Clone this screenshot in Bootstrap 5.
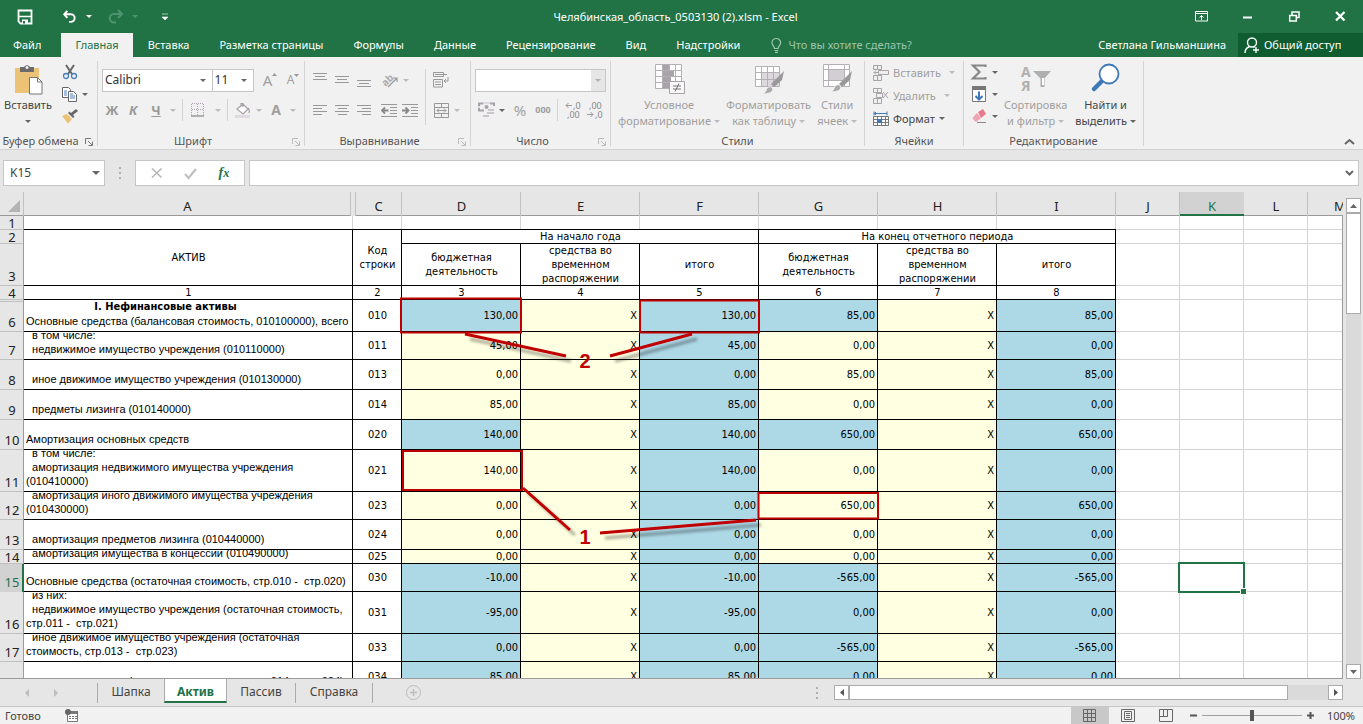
<!DOCTYPE html>
<html lang="ru">
<head>
<meta charset="utf-8">
<meta name="viewport" content="width=device-width, initial-scale=1">
<title>Челябинская_область_0503130 (2).xlsm - Excel</title>
<link href="https://cdn.jsdelivr.net/npm/bootstrap@5.3.0/dist/css/bootstrap.min.css" rel="stylesheet">
<style>
:root{--xl:#217346;--ink:#444;--dim:#a19f9f}
body{font:11px/16px "Noto Sans","Open Sans",sans-serif;color:var(--ink);background:#e6e6e6;overflow:hidden}
body>*{flex-shrink:0}
button{border:0;background:transparent;padding:0;color:inherit;font:inherit}
svg{display:block;flex:none;overflow:visible}
.bar-title{height:33px;background:var(--xl);color:#fff}
.bar-title .ic{width:46px;height:33px}
.bar-tabs{height:24px;background:var(--xl)}
.bar-tabs .rtab{color:#fff;padding:0 15px;line-height:24px;height:24px;text-decoration:none;white-space:nowrap}
.bar-tabs .rtab.first{padding:0 20px 0 13px}
.bar-tabs .rtab.active{background:#f1f1f1;color:var(--xl);padding:0 14px}
.tell{border:0;background:transparent;width:150px;color:#fff;padding:0;outline:0}
.tell::placeholder{color:#9cc5ac;opacity:1}
.share{background:#0e5c2f;color:#fff;padding:0 0 0 6px;height:24px;width:125px}
.ribbon{background:#f1f1f1;height:93px;border-bottom:1px solid #d2d2d2;padding-top:4px}
.rgroup{border-right:1px solid #d4d4d4;height:85px;flex:none}
.rgroup .rbody{height:72px}
.rgroup .rname{position:relative;text-align:center;line-height:16px;color:#555}
.rname svg{position:absolute;right:4px;top:5px}
.g1{width:98px}.g2{width:207px}.g3{width:166px}.g4{width:140px}.g5{width:254px}.g6{width:99px}.g7{width:180px}
.big{padding-top:2px;white-space:nowrap;align-self:flex-start}
.big svg.pic{margin:0 auto 2px}
.dim{color:var(--dim)}
.cv{display:inline-block;width:0;height:0;border:3px solid transparent;border-top-color:#666;border-bottom:0;vertical-align:2px}
.dim .cv,.cv.dim{border-top-color:#bbb}
.k{display:inline-flex;align-items:center;justify-content:center;height:22px;flex:none;vertical-align:top}
.k10{width:10px}.k20{width:20px}.k22{width:22px}.k24{width:24px}.k26{width:26px}
.vsep{width:1px;height:22px;background:#d4d4d4}
.vsep.tall{height:56px}
.rrow{height:30px;display:flex;align-items:center}
.fsel{appearance:none;height:23px;border:1px solid #c6c6c6;border-radius:0;background:#fff url("data:image/svg+xml,%3Csvg xmlns='http://www.w3.org/2000/svg' width='6' height='3'%3E%3Cpath d='M0 0h6L3 3z' fill='%23666'/%3E%3C/svg%3E") no-repeat right 6px center;font-size:12px;color:#333;padding:0 2px}
.fsel.off{background:#fff url("data:image/svg+xml,%3Csvg xmlns='http://www.w3.org/2000/svg' width='14' height='21'%3E%3Cpath d='M0 0h14v21H0z' fill='%23e6e6e6'/%3E%3Cpath d='M4 9h6l-3 3z' fill='%23b0b0b0'/%3E%3C/svg%3E") no-repeat right center}
.letter{font-weight:700;font-size:13px;color:#999}
.cmd{height:23px;gap:4px}
.fbar{height:42px;padding:10px 4px 6px 3px}
.fbox{background:#fff;border:1px solid #c6c6c6;height:26px}
.fbox input{border:0;outline:0;width:100%;background:transparent;color:#444;font-size:12px;padding:0 6px}
.fbox.name{width:102px}
.fbox.tools{width:110px}
.dots{width:30px}
.area{min-height:0;flex:1 1 0}
.sheetbox{position:relative;overflow:hidden;min-width:0;border-bottom:1px solid #9b9b9b}
.edge{position:absolute;right:0;top:24px;bottom:0;width:1px;background:#9b9b9b}
.gridtab{table-layout:fixed;width:100%;min-width:1400px;border-collapse:separate;border-spacing:0;color:#000;font:11px/14px "DejaVu Sans Condensed","DejaVu Sans",sans-serif;background:#fff}
.gridtab td,.gridtab th{padding:0;overflow:hidden;vertical-align:middle;text-align:center;font-weight:400;box-shadow:inset -1px -1px #d4d4d4}
.gridtab thead th{height:24px;background:#e6e6e6;font:13px/16px "Noto Sans",sans-serif;padding-top:4px;color:#222;box-shadow:inset -1px 0 #c0c0c0,inset 0 -1px #9b9b9b}
.gridtab thead th.sel{background:#d2d2d2;color:var(--xl);box-shadow:inset 0 -2px var(--xl)}
.gridtab th.ca{border-right:2px solid #e6e6e6}
.gridtab th.cc{border-left:2px solid #e6e6e6;box-shadow:inset 1px 0 #c0c0c0,inset -1px 0 #c0c0c0,inset 0 -1px #9b9b9b}
.gridtab tbody th{background:#e6e6e6;font:13px/14px "Noto Sans",sans-serif;color:#222;box-shadow:inset -1px 0 #9b9b9b,inset 0 -1px #c0c0c0}
.gridtab tbody th.low{vertical-align:bottom;padding-bottom:3px}
.gridtab tbody th.sel{background:#d2d2d2;color:var(--xl);box-shadow:inset -2px 0 var(--xl)}
.gridtab td.b{box-shadow:inset -1px -1px #000}
.gridtab td.t{box-shadow:inset 0 -1px #000,inset -1px 0 #d4d4d4}
.gridtab td.n{text-align:right;padding-right:3px}
.gridtab td.x{text-align:right;padding-right:3px;background:#ffffe1}
.gridtab td.u{background:#add8e6}
.gridtab td.y{background:#ffffe1}
.gridtab .lbl{display:flex;flex-direction:column;justify-content:flex-end;overflow:hidden;white-space:pre;text-align:left;padding:0 0 4px 2px;font-family:"Liberation Sans",sans-serif}
.gridtab .lbl b{font-family:"DejaVu Sans Condensed",sans-serif}
.h14{height:14px}.h28{height:28px}.h30{height:30px}.h32{height:32px}.h42{height:42px}
.marks{position:absolute;left:0;top:0;pointer-events:none}
.vscroll{width:20px;padding:6px 2px 0 3px}
.track{background:#dadada}
.sbtn{width:15px;height:15px;background:#fff;border:1px solid #ababab;display:flex;align-items:center;justify-content:center;flex:none}
.thumb{background:#fff;border:1px solid #ababab}
.vscroll .thumb{height:101px}
.tabsrow{height:27px;font-size:12px}
.stab{color:#444;text-decoration:none;height:24px;line-height:25px;text-align:center}
.stab.active{background:#fff;color:var(--xl);font-weight:700;border:1px solid #ababab;border-width:0 1px;border-bottom:2px solid var(--xl)}
.s66{width:66px}.s63{width:63px}.s68{width:68px}.s76{width:76px}
.nav-arrows{width:97px}
.tsep{width:1px;height:20px;background:#ababab}
.hscroll{width:509px;margin-right:20px;height:15px}
.hscroll .thumb{width:439px;height:15px}
.status{height:18px;background:#f1f1f1;border-top:1px solid #c6c6c6;padding-left:5px}
.view{width:38px;height:17px;display:flex;align-items:center;justify-content:center}
.view.on{background:#c8c8c8}
.zoom{appearance:none;width:100px;height:12px;background:linear-gradient(#a0a0a0,#a0a0a0) center/100% 1px no-repeat;margin:0 4px}
.zoom::-webkit-slider-thumb{appearance:none;width:4px;height:11px;background:#555;border:0}
</style>
</head>
<body class="vh-100 d-flex flex-column">

<header class="bar-title d-flex align-items-center">
  <div class="d-flex align-items-center flex-fill" style="flex-basis:0">
    <button class="ms-3 ps-0" aria-label="Сохранить"><svg width="18" height="16" viewBox="0 0 18 16"><path d="M2.500 1.500h13v13h-11l-2-2z" fill="none" stroke="#fff" stroke-width="1.800"/><path d="M3 7.500h12" stroke="#fff" stroke-width="1.500"/><path d="M6 10.500h6v4H6z" fill="#fff"/><path d="M7 12h2v2.500H7z" fill="#217346"/></svg></button>
    <button class="ps-4 ms-1" aria-label="Отменить"><svg width="16" height="16" viewBox="0 0 18 16"><path d="M6 1L2.500 5 6 9M3 5h7a4.200 4.200 0 0 1 0 8.500H8" fill="none" stroke="#fff" stroke-width="2.200"/></svg></button>
    <span class="cv ms-2" style="border-top-color:#fff"></span>
    <button class="ps-3" aria-label="Вернуть"><svg width="16" height="16" viewBox="0 0 16 16"><path d="M10 1l4 4-4 4M14 5H6a4.200 4.200 0 0 0 0 8.500h2" fill="none" stroke="#4f9470" stroke-width="2"/></svg></button>
    <span class="cv ms-2" style="border-top-color:#4f9470"></span>
    <button class="ps-4" aria-label="Настройка панели"><svg width="6" height="8"><path d="M0 1h6M0 4h6L3 7z" fill="#fff" stroke="#fff" stroke-width=".6"/></svg></button>
  </div>
  <div class="ps-1">Челябинская_область_0503130 (2).xlsm - Excel</div>
  <div class="d-flex justify-content-end flex-fill" style="flex-basis:0">
    <button class="ic d-flex align-items-center justify-content-center" aria-label="Лента"><svg width="14" height="12"><path d="M.5.500h12v9.500H.500zM.500 2.500h12M6.500 9V4.500M4.500 6.500l2-2 2 2" fill="none" stroke="#fff"/></svg></button>
    <button class="ic d-flex align-items-center justify-content-center" aria-label="Свернуть"><svg width="10" height="4"><path d="M0 2.500h9" stroke="#fff" stroke-width="2"/></svg></button>
    <button class="ic d-flex align-items-center justify-content-center" aria-label="Восстановить"><svg width="11" height="11"><path d="M.7 4.500h6.600v5.500H.700zM3 4V1h7v5.500H7.500" fill="none" stroke="#fff" stroke-width="1.500"/></svg></button>
    <button class="ic d-flex align-items-center justify-content-center" aria-label="Закрыть"><svg width="11" height="11"><path d="M1 1l8.500 8.500M9.500 1L1 9.500" stroke="#fff" stroke-width="2.200"/></svg></button>
  </div>
</header>

<nav class="bar-tabs d-flex align-items-center">
  <a class="rtab first" href="#">Файл</a><a class="rtab active" href="#">Главная</a><a class="rtab" href="#">Вставка</a><a class="rtab" href="#">Разметка страницы</a><a class="rtab" href="#">Формулы</a><a class="rtab" href="#">Данные</a><a class="rtab" href="#">Рецензирование</a><a class="rtab" href="#">Вид</a><a class="rtab" href="#">Надстройки</a>
  <svg class="ms-3 me-1" width="13" height="15"><path d="M3.500 10.500C3.500 8 1 7.500 1 4.800a4.300 4.300 0 0 1 8.600 0C9.600 7.500 7 8 7 10.500zM3.500 12.500h3.800M4 14.300h3" fill="none" stroke="#9cc5ac" stroke-width="1.200"/></svg>
  <input class="tell" aria-label="Помощник" placeholder="Что вы хотите сделать?">
  <span class="ms-auto text-white me-2 pe-1">Светлана Гильманшина</span>
  <button class="share d-flex align-items-center gap-1"><svg width="16" height="17"><circle cx="8" cy="5.500" r="4.500" fill="none" stroke="#fff" stroke-width="1.400"/><path d="M1 16c0-3.500 2-5.500 4.500-6.500M9.500 9.500l1 1M12 10v6M9 13h6" fill="none" stroke="#fff" stroke-width="1.400"/></svg>Общий доступ</button>
</nav>

<section class="ribbon d-flex">
  <div class="rgroup g1">
    <div class="rbody d-flex">
      <button class="big ms-1"><svg class="pic" width="32" height="32"><path d="M3 5h24v25H3z" fill="#ecc277"/><path d="M8 4h4a3.500 3.500 0 0 1 6 0h4v5H8z" fill="#6b6b6b"/><circle cx="15" cy="4.500" r="1.500" fill="#f1f1f1"/><path d="M17.500 14.500h8l4.500 4.500v12H17.500z" fill="#fff" stroke="#777"/><path d="M25.500 14.500v4.500H30" fill="none" stroke="#777"/></svg>Вставить<br><i class="cv"></i></button>
      <div class="ms-1 ps-1">
        <button class="k k20" aria-label="Вырезать"><svg width="16" height="16"><path d="M4 1l6 9M12 1L6 10" stroke="#666" stroke-width="2"/><circle cx="4" cy="12" r="2.500" fill="none" stroke="#4a7ebb" stroke-width="1.300"/><circle cx="12" cy="12" r="2.500" fill="none" stroke="#4a7ebb" stroke-width="1.300"/></svg></button><br>
        <button class="k k20" aria-label="Копировать"><svg width="16" height="15"><path d="M.5.500h6l2 2v8H.500z" fill="#fff" stroke="#666"/><path d="M6.500 4.500h5l3 3v7h-8z" fill="#fff" stroke="#666"/><path d="M2 4h3M2 6h3M2 8h3M8 9h5M8 11h5M8 7h3" stroke="#4a7ebb"/></svg></button><span class="k k10"><i class="cv"></i></span><br>
        <button class="k k20" aria-label="Формат по образцу"><svg width="16" height="15"><path d="M0 7l5-2 5 5-4 4.500z" fill="#ecc277"/><path d="M6 4l5 5 1.500-1.500-5-5zM9 4l5-4 2 2-5 4z" fill="#666"/></svg></button>
      </div>
    </div>
    <div class="rname"><span class="me-3">Буфер обмена</span><svg width="8" height="8"><path d="M.5 6V.500H6M3 3l4 4M7.500 3.500v4h-4" fill="none" stroke="#777"/></svg></div>
  </div>

  <div class="rgroup g2">
    <div class="rbody ps-1 pt-1">
      <div class="rrow">
        <select class="fsel" style="width:112px" aria-label="Шрифт"><option>Calibri</option></select><select class="fsel" style="width:43px;margin-left:-1px" aria-label="Размер"><option>11</option></select>
        <button class="k k24 dim ms-1" style="font-size:15px">A<sup><svg width="5" height="3"><path d="M0 3h5L2.500 0z" fill="#999"/></svg></sup></button><button class="k k22 dim" style="font-size:12px">A<sup><svg width="5" height="3"><path d="M0 0h5L2.500 3z" fill="#999"/></svg></sup></button>
      </div>
      <div class="rrow">
        <button class="k k20 letter">Ж</button><button class="k k22 letter fst-italic">К</button><button class="k k24 letter text-decoration-underline">Ч</button><span class="k k10 dim"><i class="cv"></i></span>
        <span class="vsep ms-1 me-1"></span>
        <button class="k k22" aria-label="Границы"><svg width="14" height="14"><path d="M1 .500h12M1 6.500h12M.500 1v12M6.500 1v12M12.500 1v12" stroke="#b0a6b2" stroke-dasharray="1 1"/><path d="M0 13h13" stroke="#999" stroke-width="1.500"/></svg></button><span class="k k10 dim ms-1"><i class="cv"></i></span>
        <span class="vsep ms-1 me-1"></span>
        <button class="k k22" aria-label="Заливка"><svg width="17" height="16"><path d="M2 7l6-5 5 5-5 5zM6 5V1.500h2V5M13 6q2 2 1 5" fill="#fff" stroke="#a8a3aa" stroke-width="1.200"/><path d="M0 13h15v3H0z" fill="#e0dbe2"/></svg></button><span class="k k10 dim"><i class="cv"></i></span>
        <button class="k k24 dim fw-bold" style="font-size:14px">A</button><span class="k k10 dim"><i class="cv"></i></span>
      </div>
    </div>
    <div class="rname"><span class="me-3">Шрифт</span><svg width="8" height="8"><path d="M.5 6V.500H6M3 3l4 4M7.500 3.500v4h-4" fill="none" stroke="#bbb"/></svg></div>
  </div>

  <div class="rgroup g3">
    <div class="rbody ps-1 pt-1 d-flex align-items-start">
      <div>
        <div class="rrow">
          <button class="k k22" aria-label="По верхнему краю"><svg width="14" height="14"><path d="M0 .500h14M2 3.500h10M0 6.500h14" stroke="#999"/></svg></button><button class="k k22" aria-label="По середине"><svg width="14" height="14"><path d="M0 3.500h14M2 6.500h10M0 9.500h14" stroke="#999"/></svg></button><button class="k k22" aria-label="По нижнему краю"><svg width="14" height="14"><path d="M0 7.500h14M2 10.500h10M0 13.500h14" stroke="#999"/></svg></button><button class="k k22 ms-1 dim" aria-label="Ориентация"><svg width="18" height="18"><text x="0" y="13" font-size="10" font-weight="700" fill="#aaa" transform="rotate(-45 6 9)">ab</text><path d="M7 16l9-9M16 11V7h-4" fill="none" stroke="#999" stroke-width="1.200"/></svg></button><span class="k k10 dim"><i class="cv"></i></span>
        </div>
        <div class="rrow">
          <button class="k k22" aria-label="Влево"><svg width="14" height="12"><path d="M0 1.500h14M0 4.500h9M0 7.500h14M0 10.500h9" stroke="#999"/></svg></button><button class="k k22" aria-label="По центру"><svg width="14" height="12"><path d="M0 1.500h14M3 4.500h9M0 7.500h14M3 10.500h9" stroke="#999"/></svg></button><button class="k k22" aria-label="Вправо"><svg width="14" height="12"><path d="M0 1.500h14M5 4.500h9M0 7.500h14M5 10.500h9" stroke="#999"/></svg></button><button class="k k20 ms-1" aria-label="Уменьшить отступ"><svg width="16" height="13"><path d="M0 .500h16M9 3.500h7M9 6.500h7M9 9.500h7M0 12.500h16" stroke="#999"/><path d="M7.500 6.500H1M4 3.500l-3 3 3 3" stroke="#888" stroke-width="1.800" fill="none"/></svg></button><button class="k k22" aria-label="Увеличить отступ"><svg width="16" height="13"><path d="M0 .500h16M9 3.500h7M9 6.500h7M9 9.500h7M0 12.500h16" stroke="#999"/><path d="M0 6.500h6M3.500 3.500l3 3-3 3" stroke="#888" stroke-width="1.800" fill="none"/></svg></button>
        </div>
      </div>
      <span class="vsep tall mt-1 ms-1 me-1"></span>
      <div>
        <div class="rrow"><button class="k k22" aria-label="Перенести текст"><svg width="16" height="16"><path d="M.5.500h10v4H.500zM2 2.500h12M.500 7.500h9v7.500H.500zM2 10h6M2 12.500h6M15 5v4h-4M13 7l-2 2 2 2" fill="none" stroke="#999"/></svg></button></div>
        <div class="rrow"><button class="k k22" aria-label="Объединить"><svg width="15" height="15"><path d="M.5.500h14v14H.500zM.500 4.500h14M.500 10.500h14M7.500.500v4M7.500 10.500v4M3 7.500h9M5 5.500l-2 2 2 2M10 5.500l2 2-2 2" fill="none" stroke="#999"/></svg></button><span class="k k10 dim"><i class="cv"></i></span></div>
      </div>
    </div>
    <div class="rname"><span class="me-3">Выравнивание</span><svg width="8" height="8"><path d="M.5 6V.500H6M3 3l4 4M7.500 3.500v4h-4" fill="none" stroke="#bbb"/></svg></div>
  </div>

  <div class="rgroup g4">
    <div class="rbody ps-1 pt-1">
      <div class="rrow"><select class="fsel off" style="width:131px" aria-label="Формат числа"><option></option></select></div>
      <div class="rrow">
        <button class="k k22" aria-label="Денежный формат"><svg width="17" height="16"><path d="M1 4V1.500h4M12 1.500h4V4M1 6v2.500h5" fill="none" stroke="#a8a3aa" stroke-width="2"/><path d="M5 1h7M1 4v2" stroke="#c8c3ca"/><circle cx="8.500" cy="5" r="2" fill="#a8a3aa"/><path d="M10 8h6M9 11h7M5 14h6" stroke="#ccc5ce" stroke-width="2"/></svg></button><span class="k k10"><i class="cv"></i></span>
        <button class="k k26 dim" style="font-size:15px">%</button><button class="k k20 dim fw-bold" style="font-size:9px">000</button>
        <span class="vsep ms-1 me-1"></span>
        <button class="k k22 dim" aria-label="Увеличить разрядность"><svg width="16" height="16" fill="#888" font-size="9"><text x="8" y="7">,0</text><text x="2" y="16">,00</text><path d="M7 3.500H1M3.500 1L1 3.500 3.500 6" fill="none" stroke="#999"/></svg></button><button class="k k22 dim" aria-label="Уменьшить разрядность"><svg width="16" height="16" fill="#888" font-size="9"><text x="2" y="7">,00</text><text x="8" y="16">,0</text><path d="M0 12.500h6M3.500 10L6 12.500 3.500 15" fill="none" stroke="#999"/></svg></button>
      </div>
    </div>
    <div class="rname"><span class="me-3">Число</span><svg width="8" height="8"><path d="M.5 6V.500H6M3 3l4 4M7.500 3.500v4h-4" fill="none" stroke="#bbb"/></svg></div>
  </div>

  <div class="rgroup g5">
    <div class="rbody d-flex justify-content-around px-1">
      <button class="big dim"><svg class="pic" width="32" height="32"><path d="M2.500 1.500h26v24h-26zM2.500 7.500h26M2.500 13.500h26M2.500 19.500h26M9.500 1.500v24M16.500 1.500v24M22.500 1.500v24" fill="#fff" stroke="#b5b0b6"/><path d="M10 2h6v5h-6zM10 8h11v5H10zM10 14h8v5h-8zM10 20h6v5h-6z" fill="#a8a3a9"/><path d="M16.500 18.500h15v12h-15z" fill="#f8f8f8" stroke="#a8a3a9"/><path d="M20 23h8M20 26h8M26 20.500l-4 8" stroke="#777"/></svg>Условное<br>форматирование <i class="cv"></i></button>
      <button class="big dim"><svg class="pic" width="32" height="32"><path d="M2.500 3.500h24v20h-24z" fill="#fff"/><path d="M9 10h17v13H9z" fill="#dcd8dd"/><path d="M2.500 3.500h24v20h-24zM2.500 9.500h24M2.500 16.500h24M8.500 3.500v20M14.500 3.500v20M20.500 3.500v20" fill="none" stroke="#b5b0b6"/><path d="M31 8l-2 9-8 7-3-3z" fill="#999"/><path d="M9 31q4-1 5-6 4-3 6 1 0 5-11 5z" fill="#aaa" stroke="#f1f1f1"/></svg>Форматировать<br>как таблицу <i class="cv"></i></button>
      <button class="big dim"><svg class="pic" width="32" height="32"><path d="M2.500 1.500h26v22h-26z" fill="#fff"/><path d="M8 7h15v10H8z" fill="#d2ced3"/><path d="M2.500 1.500h26v22h-26zM2.500 6.500h26M2.500 17.500h26M7.500 1.500v22M23.500 1.500v22" fill="none" stroke="#b5b0b6"/><path d="M31 8l-2 9-8 7-3-3z" fill="#999"/><path d="M9 29q4-1 5-6 4-3 6 1 0 5-11 5z" fill="#aaa" stroke="#f1f1f1"/></svg>Стили<br>ячеек <i class="cv"></i></button>
    </div>
    <div class="rname">Стили</div>
  </div>

  <div class="rgroup g6">
    <div class="rbody ps-2">
      <button class="cmd dim d-flex align-items-center"><svg width="16" height="16"><path d="M.5.500h8v4H.500zM4.500.500v4M.500 10.500h8v5H.500zM4.500 10.500v5M5.500 5.500h10v4h-10zM5 7.500H1M3 5.500l-2 2 2 2" fill="#eee" stroke="#a8a3a9"/></svg>Вставить <i class="cv ms-1"></i></button>
      <button class="cmd dim d-flex align-items-center"><svg width="16" height="16"><path d="M.5.500h8v4H.500zM4.500.500v4M.500 10.500h8v5H.500zM4.500 10.500v5M3.500 5.500h6v4h-6zM10 4l5 6M15 4l-5 6" fill="none" stroke="#a8a3a9"/></svg>Удалить <i class="cv ms-1"></i></button>
      <button class="cmd d-flex align-items-center"><svg width="16" height="16"><path d="M1 2.500h13M1 .500v4M14 .500v4M3 1L1.500 2.500 3 4" stroke="#3f78b8" fill="none"/><path d="M.5 5.500h15v9H.500zM.500 8.500h15M.500 11.500h15M4.500 5.500v9M8.500 5.500v9M12.500 5.500v9" fill="#fff" stroke="#777"/><path d="M4 8h5v4H4z" fill="#3f78b8"/></svg>Формат<i class="cv"></i></button>
    </div>
    <div class="rname">Ячейки</div>
  </div>

  <div class="rgroup g7">
    <div class="rbody d-flex">
      <div class="ps-1">
        <button class="k k22" aria-label="Сумма"><svg width="16" height="16"><path d="M14.500 3V1.500H2L8.500 8 2 14.500h12.500V13" fill="none" stroke="#888" stroke-width="2.200"/></svg></button><span class="k k10"><i class="cv"></i></span><br>
        <button class="k k22" aria-label="Заполнить"><svg width="14" height="16"><path d="M.5.500h13v15H.500z" fill="#fff" stroke="#777"/><path d="M0 0h14v4H0z" fill="#777"/><path d="M7 5.500v8M3.500 10L7 13.500 10.500 10" fill="none" stroke="#3f78b8" stroke-width="2"/></svg></button><span class="k k10"><i class="cv"></i></span><br>
        <button class="k k22" aria-label="Очистить"><svg width="15" height="14"><path d="M6 3l5-3 3 5-5 4z" fill="#e8798f"/><path d="M5 4l4 5-4 3.500H3L.500 9z" fill="#f0a3b2"/><path d="M5 13.500h9" stroke="#888"/></svg></button><span class="k k10"><i class="cv"></i></span>
      </div>
      <button class="big dim ms-1"><svg class="pic" width="32" height="32"><text x="1" y="14" font-size="14" font-weight="700" fill="#b0b0b0">А</text><text x="1" y="28" font-size="14" font-weight="700" fill="#b0b0b0">Я</text><path d="M13 8h18l-6.500 7.500V24h-4v-8.500z" fill="#b0b0b0"/><path d="M22 15h2v7h-2z" fill="#fff"/></svg>Сортировка<br>и фильтр <i class="cv"></i></button>
      <button class="big ms-2"><svg class="pic" width="32" height="32"><path d="M12 18L4 26" stroke="#3f78b8" stroke-width="4.500" stroke-linecap="round"/><circle cx="19" cy="11" r="9.500" fill="#fff" stroke="#3f78b8" stroke-width="1.800"/></svg>Найти и<br>выделить <i class="cv"></i></button>
    </div>
    <div class="rname">Редактирование</div>
  </div>
  <button class="ms-auto align-self-end me-2 pb-1" aria-label="Свернуть ленту"><svg width="11" height="7"><path d="M1 6l4.500-4L10 6" fill="none" stroke="#666" stroke-width="2"/></svg></button>
</section>

<section class="fbar d-flex">
  <div class="fbox name d-flex align-items-center"><input aria-label="Имя ячейки" value="K15"><i class="cv me-1" style="border-width:4px 4px 0"></i></div>
  <div class="dots d-flex justify-content-center align-items-center"><svg width="2" height="12"><path d="M0 0h2v2H0zM0 5h2v2H0zM0 10h2v2H0z" fill="#b0b0b0"/></svg></div>
  <div class="fbox tools d-flex align-items-center justify-content-around px-1">
    <button aria-label="Отмена"><svg width="12" height="12"><path d="M1 1.500l9.500 9M10.500 1.500L1 10.500" stroke="#b5b5b5" stroke-width="1.600"/></svg></button>
    <button aria-label="Ввод"><svg width="13" height="11"><path d="M1 6l3.500 4L12 1" fill="none" stroke="#c0c0c0" stroke-width="2.200"/></svg></button>
    <button style="font:italic 700 14px 'Liberation Serif',serif;color:#217346">f<small>x</small></button>
  </div>
  <div class="fbox flex-fill ms-1 d-flex align-items-center"><input aria-label="Строка формул"><svg class="me-1" width="9" height="6"><path d="M1 1l3.500 3.500L8 1" fill="none" stroke="#666" stroke-width="2"/></svg></div>
</section>

<main class="area d-flex">
  <div class="sheetbox flex-fill">
    <table class="gridtab">
      <colgroup><col style="width:24px"><col style="width:329px"><col style="width:49px"><col span="6" style="width:119px"><col span="4" style="width:64px"><col></colgroup>
      <thead><tr><th><svg class="ms-auto me-1" width="12" height="12"><path d="M12 0v12H0z" fill="#b4b4b4"/></svg></th><th class="ca">A</th><th class="cc">C</th><th>D</th><th>E</th><th>F</th><th>G</th><th>H</th><th>I</th><th>J</th><th class="sel">K</th><th>L</th><th>M</th><th></th></tr></thead>
      <tbody id="rows">
        <tr class="h14"><th>1</th><td class="t"></td><td class="t"></td><td class="t"></td><td class="t"></td><td class="t"></td><td class="t"></td><td class="t"></td><td class="t"></td><td></td><td></td><td></td><td></td><td></td></tr>
        <tr class="h14"><th>2</th><td class="b" rowspan="2">АКТИВ</td><td class="b" rowspan="2">Код<br>строки</td><td class="b" colspan="3">На начало года</td><td class="b" colspan="3">На конец отчетного периода</td><td></td><td></td><td></td><td></td><td></td></tr>
        <tr class="h42"><th class="low">3</th><td class="b">бюджетная<br>деятельность</td><td class="b">средства во<br>временном<br>распоряжении</td><td class="b">итого</td><td class="b">бюджетная<br>деятельность</td><td class="b">средства во<br>временном<br>распоряжении</td><td class="b">итого</td><td></td><td></td><td></td><td></td><td></td></tr>
        <tr class="h14"><th>4</th><td class="b">1</td><td class="b">2</td><td class="b">3</td><td class="b">4</td><td class="b">5</td><td class="b">6</td><td class="b">7</td><td class="b">8</td><td></td><td></td><td></td><td></td><td></td></tr>
      </tbody>
    </table>
    <svg class="marks" width="1342" height="487" viewBox="0 192 1342 487">
      <defs><filter id="sh" x="-20%" y="-60%" width="140%" height="260%"><feDropShadow dx="5" dy="5" stdDeviation="1.500" flood-color="#000" flood-opacity=".35"/></filter></defs>
      <g fill="none" stroke="#c00000" stroke-width="2"><path d="M401 298.500h120v34H401zM640 300.500h119v32H640zM403 451h119v39H403zM758.500 493h119.500v25.500H758.500z"/></g>
      <g fill="none" stroke="#c00000" stroke-width="3" filter="url(#sh)"><path d="M465 334l101 22M610 356l82-22M523 488l47 42M600 533l156-13"/></g>
      <g fill="#c00000" font-family="Liberation Sans" font-weight="700" font-size="20" text-anchor="middle"><text x="585" y="368">2</text><text x="585" y="544">1</text></g>
      <path d="M1179 563h65v29h-65z" fill="none" stroke="#217346" stroke-width="2"/><path d="M1240.500 588.500h6v6h-6z" fill="#217346" stroke="#fff"/>
      <path d="M0 301.500h23" stroke="#c0c0c0"/>
    </svg>
    <span class="edge"></span>
  </div>
  <div class="vscroll d-flex flex-column">
    <button class="sbtn" aria-label="Вверх"><svg width="7" height="4"><path d="M0 4h7L3.500 0z" fill="#666"/></svg></button>
    <div class="track flex-fill"><div class="thumb"></div></div>
    <button class="sbtn" aria-label="Вниз"><svg width="7" height="4"><path d="M0 0h7L3.500 4z" fill="#666"/></svg></button>
  </div>
</main>

<nav class="tabsrow d-flex align-items-start">
  <div class="nav-arrows d-flex align-self-center"><svg class="ms-4" width="40" height="8"><path d="M5 0v8L1 4zM30 0v8l4-4z" fill="#bdbdbd"/></svg></div>
  <span class="tsep mt-1"></span><a class="stab s66" href="#">Шапка</a><a class="stab active s63" href="#">Актив</a><a class="stab s68" href="#">Пассив</a><span class="tsep mt-1"></span><a class="stab s76" href="#">Справка</a><span class="tsep mt-1"></span>
  <button class="ms-4 ps-2 align-self-center" aria-label="Новый лист"><svg width="17" height="17"><circle cx="8.500" cy="8.500" r="7" fill="none" stroke="#bdbdbd"/><path d="M8.500 5v7M5 8.500h7" stroke="#bdbdbd" stroke-width="1.500"/></svg></button>
  <svg class="ms-auto me-3 align-self-center" width="2" height="12"><path d="M0 0h2v2H0zM0 5h2v2H0zM0 10h2v2H0z" fill="#b0b0b0"/></svg>
  <div class="hscroll d-flex track align-self-center">
    <button class="sbtn" aria-label="Влево"><svg width="4" height="7"><path d="M4 0v7L0 3.500z" fill="#555"/></svg></button><div class="thumb"></div><button class="sbtn ms-auto" aria-label="Вправо"><svg width="4" height="7"><path d="M0 0v7l4-3.500z" fill="#555"/></svg></button>
  </div>
</nav>

<footer class="status d-flex align-items-center">
  <span>Готово</span>
  <svg class="ms-4" width="14" height="13"><path d="M2.500 3.500h10v9h-10z" fill="#fff" stroke="#777"/><path d="M5 2h8v3H5z" fill="#777"/><circle cx="3" cy="3" r="3" fill="#666"/><path d="M4 7.500h8M4 9.500h8" stroke="#777" stroke-dasharray="2 1"/></svg>
  <button class="view on ms-auto" aria-label="Обычный"><svg width="13" height="13"><path d="M.5.500h12v12H.500zM.500 4.500h12M.500 8.500h12M4.500.500v12M8.500.500v12" fill="none" stroke="#666"/></svg></button>
  <button class="view" aria-label="Разметка"><svg width="14" height="13"><path d="M.5.500h13v12H.500zM3.500 2.500h7v8h-7zM5 4.500h4M5 6.500h4M5 8.500h4" fill="none" stroke="#666"/></svg></button>
  <button class="view" aria-label="Страничный"><svg width="14" height="13"><path d="M.5.500h13v12H.500zM4.500.500v7h4v-7M.500 7.500h8" fill="none" stroke="#666"/></svg></button>
  <button class="ms-1" aria-label="Уменьшить"><svg width="9" height="9"><path d="M1 4.500h7" stroke="#555" stroke-width="2"/></svg></button>
  <input class="zoom" type="range" min="0" max="100" value="50" aria-label="Масштаб">
  <button aria-label="Увеличить"><svg width="9" height="9"><path d="M1 4.500h7M4.500 1v7" stroke="#555" stroke-width="2"/></svg></button>
  <span class="ms-2 ps-1 me-2">100%</span>
</footer>

<script>
// номер, высота, наименование, код, значения D F G I, заливка D и G (u - расчётная, y - ввод)
const data = [
  [6,32,'Основные средства (балансовая стоимость, 010100000), всего','010','130,00','130,00','85,00','85,00','u'],
  [7,28,'  в том числе:\n  недвижимое имущество учреждения (010110000)','011','45,00','45,00','0,00','0,00','y'],
  [8,30,'  иное движимое имущество учреждения (010130000)','013','0,00','0,00','85,00','85,00','y'],
  [9,30,'  предметы лизинга (010140000)','014','85,00','85,00','0,00','0,00','y'],
  [10,30,'Амортизация основных средств','020','140,00','140,00','650,00','650,00','u'],
  [11,42,'  в том числе:\n  амортизация недвижимого имущества учреждения\n(010410000)','021','140,00','140,00','0,00','0,00','y'],
  [12,28,'  амортизация иного движимого имущества учреждения\n(010430000)','023','0,00','0,00','650,00','650,00','y'],
  [13,30,'  амортизация предметов лизинга (010440000)','024','0,00','0,00','0,00','0,00','y'],
  [14,14,'  амортизация имущества в концессии (010490000)','025','0,00','0,00','0,00','0,00','y'],
  [15,28,'Основные средства (остаточная стоимость, стр.010 -  стр.020)','030','-10,00','-10,00','-565,00','-565,00','u'],
  [16,42,'  из них:\n  недвижимое имущество учреждения (остаточная стоимость,\nстр.011 -  стр.021)','031','-95,00','-95,00','0,00','0,00','u'],
  [17,28,'  иное движимое имущество учреждения (остаточная\nстоимость, стр.013 -  стр.023)','033','0,00','0,00','-565,00','-565,00','u'],
  [18,30,'  предметы лизинга (остаточная стоимость, стр.014 -  стр.024)','034','85,00','85,00','0,00','0,00','u']
];
document.getElementById('rows').insertAdjacentHTML('beforeend', data.map(([no,h,name,code,d,f,g,i,c]) => {
  const title = no === 6 ? '<b class="text-center pe-5">I. Нефинансовые активы</b>' : '';
  return `<tr class="h${h}"><th class="${h > 14 ? 'low' : ''} ${no === 15 ? 'sel' : ''}">${no}</th>` +
    `<td class="b"><div class="lbl h${h}">${title}<span>${name}</span></div></td><td class="b">${code}</td>` +
    `<td class="b n ${c}">${d}</td><td class="b x">X</td><td class="b n u">${f}</td>` +
    `<td class="b n ${c}">${g}</td><td class="b x">X</td><td class="b n u">${i}</td>` + '<td></td>'.repeat(5) + '</tr>';
}).join(''));
</script>
<script src="https://cdn.jsdelivr.net/npm/bootstrap@5.3.0/dist/js/bootstrap.bundle.min.js"></script>
</body>
</html>
